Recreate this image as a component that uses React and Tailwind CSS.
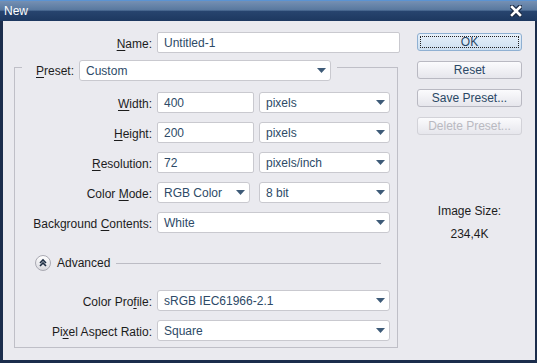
import React from "react";

const font = { fontFamily: '"Liberation Sans", Arial, sans-serif' };

function Label({ before, u, after, className = "" }) {
  return (
    <span className={`text-[12px] leading-[14px] text-[#1c1c1c] whitespace-nowrap ${className}`}>
      {before}
      <u className="underline underline-offset-2">{u}</u>
      {after}
    </span>
  );
}

function Arrow() {
  return (
    <svg width="9" height="5" viewBox="0 0 9 5" className="shrink-0">
      <path d="M0 0H9L4.5 5Z" fill="#3e5b78" />
    </svg>
  );
}

function Field({ value, w }) {
  return (
    <div className={`${w} h-[21px] bg-white border border-[#c9c9cf] rounded-[2px] flex items-center pl-[6px] text-[12px] text-[#2d4a67]`}>
      {value}
    </div>
  );
}

function Select({ value, w, className = "" }) {
  return (
    <div className={`${w} h-[21px] bg-white border border-[#c9c9cf] rounded-[3px] flex items-center justify-between pl-[6px] pr-[4px] text-[12px] text-[#2d4a67] ${className}`}>
      <span>{value}</span>
      <Arrow />
    </div>
  );
}

function Row({ label, children, mt = "mt-[9px]" }) {
  return (
    <div className={`flex items-center gap-[5px] h-[21px] ${mt}`}>
      <div className="w-[137px] text-right">{label}</div>
      {children}
    </div>
  );
}

function Button({ children, primary, disabled }) {
  if (primary) {
    return (
      <div className="w-[105px] h-[18px] rounded-[3px] border border-[#8fb0d2] bg-[linear-gradient(#e6f0fa,#cddff0)] p-[2px]">
        <div className="h-full border border-dotted border-[#222] flex items-center justify-center text-[12px] text-[#2a4865]">
          {children}
        </div>
      </div>
    );
  }
  return (
    <div
      className={`w-[105px] h-[18px] rounded-[3px] border flex items-center justify-center text-[12px] bg-[linear-gradient(#fbfbfd,#e6e6ec)] ${
        disabled ? "border-[#d2d2d8] text-[#b9b9c1]" : "border-[#b9b9c2] text-[#2a4865]"
      }`}
    >
      {children}
    </div>
  );
}

export default function App() {
  return (
    <div className="w-[537px] h-[363px] flex flex-col bg-[#1b2d4c]" style={font}>
      <div className="h-[21px] border-t border-[#5b93d2] bg-[linear-gradient(#7590b3,#58789f_45%,#27446e_52%,#1d3860)] flex items-center justify-between pl-[4px] pr-[15px]">
        <span className="text-[12px] text-white">New</span>
        <svg width="12" height="12" viewBox="0 0 12 12">
          <path d="M2 2L10 10M10 2L2 10" stroke="#1a2a44" strokeWidth="5" strokeLinecap="square" />
          <path d="M2 2L10 10M10 2L2 10" stroke="#fff" strokeWidth="2.6" strokeLinecap="square" />
        </svg>
      </div>

      <div className="flex-1 ml-[3px] mr-[2px] mb-[3px] bg-[#eaeaef] flex">
        <div className="w-[397px] flex flex-col">
          <div className="flex items-center gap-[5px] h-[21px] mt-[11px]">
            <div className="w-[149px] text-right">
              <Label u="N" after="ame:" />
            </div>
            <Field value="Untitled-1" w="w-[243px]" />
          </div>

          <div className="mt-[14px] ml-[11px] w-[384px] border border-[#bfbfc7] pb-[6px]">
            <div className="-mt-[8px] ml-[7px] w-fit bg-[#eaeaef] flex items-center gap-[5px] pl-[14px] pr-[6px]">
              <Label u="P" after="reset:" />
              <Select value="Custom" w="w-[252px]" />
            </div>

            <Row mt="mt-[11px]" label={<Label u="W" after="idth:" />}>
              <Field value="400" w="w-[97px]" />
              <Select value="pixels" w="w-[131px]" />
            </Row>
            <Row label={<Label u="H" after="eight:" />}>
              <Field value="200" w="w-[97px]" />
              <Select value="pixels" w="w-[131px]" />
            </Row>
            <Row label={<Label u="R" after="esolution:" />}>
              <Field value="72" w="w-[97px]" />
              <Select value="pixels/inch" w="w-[131px]" />
            </Row>
            <Row label={<Label before="Color " u="M" after="ode:" />}>
              <Select value="RGB Color" w="w-[93px]" />
              <Select value="8 bit" w="w-[131px]" className="ml-[4px]" />
            </Row>
            <Row label={<Label before="Background " u="C" after="ontents:" />}>
              <Select value="White" w="w-[233px]" />
            </Row>

            <div className="mt-[22px] h-[16px] flex items-center ml-[20px] mr-[16px]">
              <svg width="16" height="16" viewBox="0 0 16 16" className="shrink-0">
                <defs>
                  <linearGradient id="adv" x1="0" y1="0" x2="0" y2="1">
                    <stop offset="0" stopColor="#ffffff" />
                    <stop offset="1" stopColor="#d8d8de" />
                  </linearGradient>
                </defs>
                <circle cx="8" cy="8" r="7.5" fill="url(#adv)" stroke="#a9a9b2" />
                <path d="M5 8L8 5L11 8M5 11L8 8L11 11" fill="none" stroke="#1e2e44" strokeWidth="1.6" />
              </svg>
              <span className="ml-[6px] text-[12px] text-[#1c1c1c]">Advanced</span>
              <div className="flex-1 ml-[6px] h-px bg-[#bcbcc4]" />
            </div>

            <Row mt="mt-[19px]" label={<Label before="Color Pro" u="f" after="ile:" />}>
              <Select value="sRGB IEC61966-2.1" w="w-[233px]" />
            </Row>
            <Row label={<Label before="Pi" u="x" after="el Aspect Ratio:" />}>
              <Select value="Square" w="w-[233px]" />
            </Row>
          </div>
        </div>

        <div className="ml-[17px] flex flex-col">
          <div className="mt-[12px] flex flex-col gap-[10px]">
            <Button primary>OK</Button>
            <Button>Reset</Button>
            <Button>Save Preset...</Button>
            <Button disabled>Delete Preset...</Button>
          </div>
          <div className="mt-[69px] text-center text-[12px] leading-[14px] text-[#1c1c1c]">Image Size:</div>
          <div className="mt-[9px] text-center text-[12px] leading-[14px] text-[#1c1c1c]">234,4K</div>
        </div>
      </div>
    </div>
  );
}
